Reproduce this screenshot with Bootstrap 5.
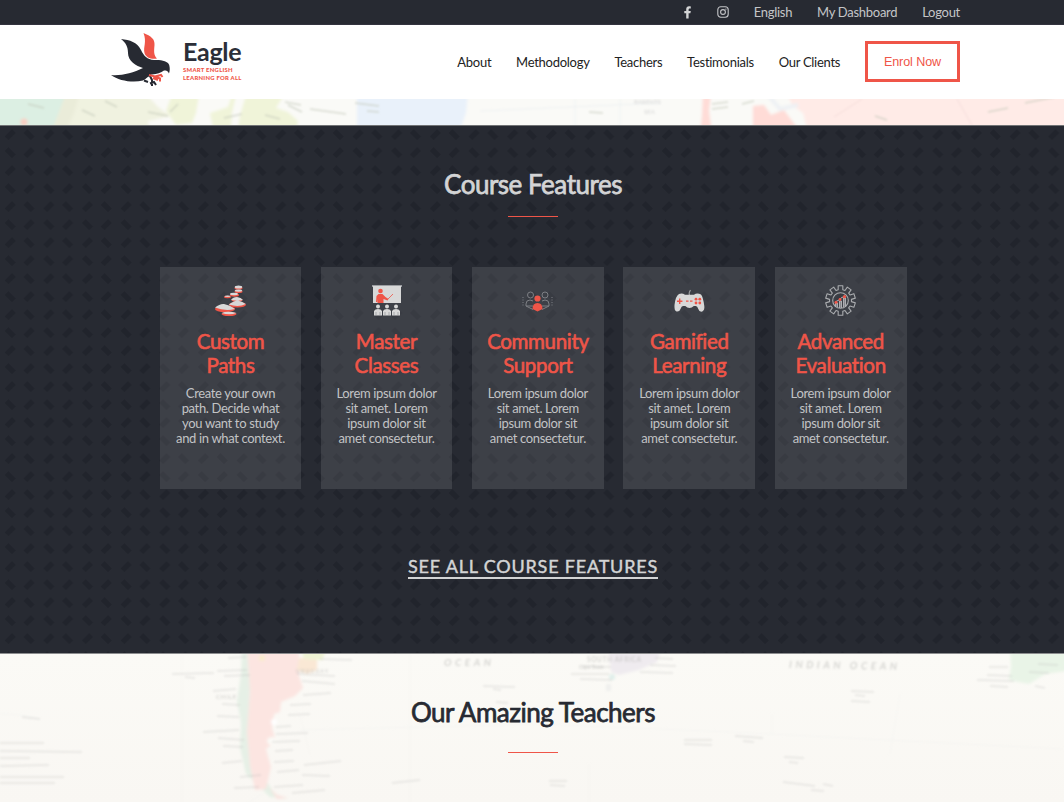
<!DOCTYPE html>
<html lang="en">
<head>
<meta charset="utf-8">
<meta name="viewport" content="width=device-width, initial-scale=1">
<title>Eagle – Smart English</title>
<link href="https://cdn.jsdelivr.net/npm/bootstrap@5.3.0/dist/css/bootstrap.min.css" rel="stylesheet">
<style>
:root{--ink:#272a32;--coral:#ef5548;--silver:#d3d4d5}
body{font-family:Lato,sans-serif;font-size:13px;color:var(--ink);background:#fbfaf6;height:802px;overflow:hidden}
a{text-decoration:none;color:inherit}
.topbar{height:25px;background:var(--ink);color:#c4c5c8;padding-right:104px;gap:24.8px;border-bottom:1px solid #33333f}
.topbar,.mainbar nav{font-size:13px;line-height:20px;letter-spacing:-.27px}
.mainbar{height:74px;background:#fff;padding:0 104px 1px 110px}
.mainbar nav{gap:24.8px;color:#222}
.eagle-mark{margin-top:-3px}
.brand-words{margin:-5px 0 0 13px}
.brand-name{font-size:25px;font-weight:700;line-height:28px;letter-spacing:-.3px;color:#2b2e38}
.brand-tag{font-size:5.9px;font-weight:900;line-height:7.7px;color:var(--coral);letter-spacing:.27px;margin-top:1.5px}
.enrol{width:95px;height:41px;border:3px solid var(--coral);color:var(--coral);font-family:"Liberation Sans",sans-serif;font-size:12.6px;letter-spacing:-.1px}
.map-strip{height:26px;overflow:hidden}
.map-strip svg,.map-bottom svg{display:block}
.features{height:529px;background:var(--ink);color:var(--silver);border-top:1px solid #717375;border-bottom:1px solid #8c8d8f}
.features>.pattern{inset:0;width:100%;height:100%}
.sec-title{font-size:26px;line-height:32px;font-weight:400;margin:0;letter-spacing:-.48px;-webkit-text-stroke:.75px currentColor}
.sec-head{padding-left:2px}
.rule{width:50px;height:1px;background:var(--coral)}
.cards{padding-left:160px;gap:19.6px;margin-top:50px}
.feature{width:131.8px;height:222px;background:rgba(255,255,255,.105);padding-top:17.5px}
.feature:first-child{width:141px}
.feature h3{font-size:20.5px;line-height:24.2px;margin:13px 0 9.5px;color:var(--coral);font-weight:400;letter-spacing:-.34px;font-variant-ligatures:common-ligatures;-webkit-text-stroke:.6px currentColor}
.feature p{font-size:13px;line-height:14.7px;margin:0;color:#c2c3c5;letter-spacing:-.35px}
.see-all{font-size:18px;line-height:21px;letter-spacing:.8px;border-bottom:2px solid var(--silver);-webkit-text-stroke:.45px currentColor}
.teachers{height:148px}
.map-bottom{inset:0}
</style>
</head>
<body>
<div class="topbar d-flex justify-content-end align-items-center">
  <a href="#" class="d-flex" aria-label="Facebook"><svg width="8" height="13" viewBox="0 0 8 13"><path fill="#d3d4d5" d="M2.2 12.5V7.2H.3V4.9h1.9V3.2C2.2 1.3 3.3.3 5 .3c.9 0 1.800.2 1.800.2v1.900h-1c-1 0-1.200.6-1.200 1.200v1.300h2.200l-.4 2.300H4.600v5.300z"/></svg></a>
  <a href="#" class="d-flex" aria-label="Instagram"><svg width="12" height="12" viewBox="0 0 12 12" fill="none" stroke="#c4c5c8"><rect x=".8" y=".8" width="10.4" height="10.4" rx="3" stroke-width="1.1"/><circle cx="6" cy="6" r="2.4" stroke-width="1.1"/><circle cx="8.9" cy="3.1" r=".7" fill="#c4c5c8" stroke="none"/></svg></a>
  <a href="#">English</a><a href="#">My Dashboard</a><a href="#">Logout</a>
</div>
<header class="mainbar d-flex justify-content-between align-items-center">
  <a href="#" class="d-flex align-items-center">
    <svg class="eagle-mark" width="60" height="56" viewBox="0 0 60 56">
      <path fill="#ef5548" d="M33.500 1C41 4 45 7 44.500 13C44 19 43.500 23 47 26.500C41.500 27.500 36 26 34.500 21C33 15 37 10 33.500 1Z"/>
      <path fill="#272a32" d="M11 7C20 8 27 10 31 18C34 24 37 27.500 44 28C51 27.500 58 29 59.200 33C60 36 60 38.500 59 41.500C58 39 56.500 38.500 54 38.500C51 41 47 42 42 42.500C38 43 37 47 33 48.500C23 51 9 49 1 43C11 44 23 41 33 36C26 34 18 29 18 21C18 15 16 11 11 7Z"/>
      <path d="M32 46l9-3.500M34 48.500l4 1.500M40 44l2 4v6M40 51.500l4-1.500 2 3" fill="none" stroke="#272a32" stroke-width="2"/>
      <path d="M39 43l6 1.500 6-1.500 1.500 2M45 44.500l5 2v3M43 46l5 2" fill="none" stroke="#ef5548" stroke-width="2"/>
    </svg>
    <span class="brand-words d-flex flex-column"><span class="brand-name">Eagle</span><span class="brand-tag">SMART ENGLISH<br>LEARNING FOR ALL</span></span>
  </a>
  <nav class="d-flex align-items-center">
    <a href="#">About</a><a href="#">Methodology</a><a href="#">Teachers</a><a href="#">Testimonials</a><a href="#">Our Clients</a>
    <a href="#" class="enrol d-flex justify-content-center align-items-center">Enrol Now</a>
  </nav>
</header>
<div class="map-strip">
  <svg width="1064" height="26" viewBox="0 0 1064 26">
    <defs><filter id="soft"><feGaussianBlur stdDeviation=".9"/></filter><filter id="softer" x="-5%" width="110%"><feGaussianBlur stdDeviation="1.700"/></filter></defs>
    <rect width="1064" height="28" fill="#fafaf7"/>
    <g filter="url(#softer)">
      <path fill="#dcefe3" d="M-6-6H67L61 14 51 34H-6Z"/><path fill="#f0f2e0" d="M67-6H145L158 8 170 17 148 22 150 34H51Z"/>
      <path fill="#eaecd9" d="M66-6h14l-6 20-8 18H52Z"/>
      <path fill="#f0f4d9" d="M172-4h27l-3 18-4 10-16 2-10-14ZM210 14l18-6 4-12h52l-8 13 12 4 10 9-2 12h-82Z"/>
      <path fill="#fafaf7" d="M236-4h10l-6 20-2 14h-7l1-16Z"/>
      <path fill="#e9f1fa" d="M357-6h111l-2 20-8 22H357Z"/>
      <path fill="#ffebe7" d="M786-6h290v40H808l-5-20-10-7Z"/>
      <path fill="#ffdcd7" d="M703-6h8l-2 18 3 22h-12l2-17ZM753 7l11-1 7 10 13-5 17 23h-48Z"/>
      <path d="M768-4l12 14 18-4" stroke="#eef1f4" fill="none" stroke-width="4"/>
      <circle cx="24" cy="23" r="3.500" fill="#f9cfc3"/>
    </g>
    <g filter="url(#soft)">
      <g stroke="#c2c6b8" stroke-width="1.700" opacity=".6" fill="none"><path d="M28 5l16 4M82 11l13 6M105 2l12 6M148 13l20 4M178 5l-8 8M224 19l18-4M265 16l15 4M285 3l16 3M288 6l14 7M310 10l36 5M355 4l24 3M367 12l12 1M589 13l14 1M712 5l16-2M712 10l16-2M742 5l12-3M875 17l12 4M988 13l20-4M1025 4l30-6"/></g>
      <path d="M957 0l16 28M834 18l28-18" stroke="#f4dcda" fill="none"/>
      <path d="M480 12l180-8M575 0v28M620 0v28" stroke="#eef1f2" fill="none"/>
    </g>
    <g fill="#dededd" font-family="Lato" font-size="6" font-weight="700" filter="url(#soft)"><text x="634" y="5">BARENTS</text><text x="644" y="15">SEA</text></g>
  </svg>
</div>
<section class="features position-relative d-flex flex-column">
  <svg class="pattern position-absolute">
    <defs><pattern id="dashes" width="38.65" height="36" patternUnits="userSpaceOnUse">
      <path d="M6.500 12.400l7.400-7.400M25.300 5l7.400 7.400M6.500 23l7.400 7.400M25.300 30.400l7.400-7.400" stroke="#21242c" stroke-width="5.500" fill="none"/>
    </pattern></defs><rect width="100%" height="100%" fill="url(#dashes)"/>
  </svg>
  <div class="sec-head position-relative d-flex flex-column align-items-center" style="padding-top:42px">
    <h2 class="sec-title">Course Features</h2>
    <div class="rule" style="margin-top:16px"></div>
  </div>
  <div class="cards position-relative d-flex text-center">
    <article class="feature"><svg width="31" height="31" viewBox="0 0 31 31"><g fill="#ef5548"><ellipse cx="23.500" cy="3" rx="4" ry="1.800"/><ellipse cx="23.500" cy="6.500" rx="4" ry="1.500"/><ellipse cx="19.500" cy="10" rx="4.500" ry="1.700"/><ellipse cx="12.500" cy="12" rx="3.500" ry="1.200"/><ellipse cx="22" cy="15" rx="5.500" ry="2"/><ellipse cx="22.500" cy="19.700" rx="8.500" ry="2.800"/><ellipse cx="10" cy="24" rx="10" ry="3.300"/><ellipse cx="14" cy="29" rx="7.500" ry="2.200"/></g><g fill="#d8d8d8"><ellipse cx="23.500" cy="2" rx="3.700" ry="1.500"/><ellipse cx="23.500" cy="5.600" rx="3.700" ry="1.200"/><ellipse cx="19" cy="9" rx="4" ry="1.200"/><ellipse cx="12.500" cy="11.300" rx="3" ry=".7"/><path d="M16 15q2-3 6-3 4 .5 6 3-5 1.500-12 0ZM13.700 19.500q6-4 9-4 5 1 8 3.500-7 3.500-17 .5ZM0 22.500q5-4 9-3.500 6 1 11 5-10 2.500-20-1.500ZM6.500 28q6-2.500 15 0-7 2.500-15 0Z"/></g></svg><h3>Custom<br>Paths</h3><p>Create your own<br>path. Decide what<br>you want to study<br>and in what context.</p></article>
    <article class="feature"><svg width="31" height="31" viewBox="0 0 31 31"><path fill="#9b9da1" d="M1 0h30v2H1z"/><path fill="#d8d8d8" d="M2 1h28v17H2z"/><g fill="#ef5548"><circle cx="9.500" cy="6" r="2.300"/><path d="M5 17l.5-6 2-2h4l3 3 3 2-1 1.500-4-1.500v4H6.500v-4l-.3 3Z"/></g><path d="M16 15l6-6" stroke="#ef5548" stroke-width=".8"/><g fill="#d8d8d8"><path d="M3 30.500v-4.500q1-2 4-2t4 2v4.500ZM12 30.500v-4.500q1-2 4-2t4 2v4.500ZM21 30.500v-4.500q1-2 4-2t4 2v4.500Z"/><circle cx="7" cy="21.500" r="2"/><circle cx="16" cy="21.500" r="2"/><circle cx="25" cy="21.500" r="2"/></g><path d="M5 27v3M9 27v3M14 27v3M18 27v3M23 27v3M27 27v3" stroke="#888a8e" stroke-width=".6"/></svg><h3>Master<br>Classes</h3><p>Lorem ipsum dolor<br>sit amet. Lorem<br>ipsum dolor sit<br>amet consectetur.</p></article>
    <article class="feature"><svg width="31" height="31" viewBox="0 0 31 31"><g stroke="#7d7f84" stroke-width="1" fill="none"><circle cx="8.500" cy="10" r="3"/><circle cx="23" cy="10" r="3"/><path d="M11 21H4v-2q0-4 4-4l3 1M20 21h7v-2q0-4-4-4l-3 1M4 21l7 3.500M27 21l-7 3.500"/><path d="M1 12v9M30 12v9" stroke-dasharray="1 1.500"/></g><g fill="#ef5548"><circle cx="15.500" cy="13.500" r="3.100"/><path d="M10.500 24q0-6 5-6t5 6l-5 2.500Z"/></g></svg><h3>Community<br>Support</h3><p>Lorem ipsum dolor<br>sit amet. Lorem<br>ipsum dolor sit<br>amet consectetur.</p></article>
    <article class="feature"><svg width="31" height="31" viewBox="0 0 31 31"><path d="M15.500 10q-1-2 1-5" stroke="#999b9e" fill="none" stroke-width="1.200"/><path fill="#d8d8d8" d="M5 9q3-1.500 6 .7h9Q23 7.500 27 9.500q2 2 3.300 11.500.5 4-2 5.500-3 .8-4-2.500-1-3-2.500-3h-2q-2 2-4.300 2t-4.200-2H9q-1.500 0-2.500 3t-4 2.500Q0 25.500.5 20 1.500 11 5 9Z"/><g fill="#ef5548"><path d="M5 13.500h1.400V15.500h2v1.400h-2v2H5v-2H3v-1.400h2ZM12 15.500h2.500v1.200H12ZM16 15.500h2.500v1.200H16Z"/><circle cx="22" cy="14.200" r="1.400"/><circle cx="25.800" cy="14.200" r="1.400"/><circle cx="22" cy="18" r="1.400"/><circle cx="25.800" cy="18" r="1.400"/></g></svg><h3>Gamified<br>Learning</h3><p>Lorem ipsum dolor<br>sit amet. Lorem<br>ipsum dolor sit<br>amet consectetur.</p></article>
    <article class="feature"><svg width="31" height="31" viewBox="0 0 31 31"><g stroke="#a9abae" fill="none" stroke-width="1.100"><path id="gear" stroke-linejoin="round"/><circle cx="15.500" cy="15.500" r="7.800"/></g><path d="M10.500 22v-4h2v4M14.500 23v-7h2v7M18.500 22v-9h2v9" stroke="#b5b6b9" fill="#85878b" stroke-width=".9"/><path d="M10 17l4-2 2-2 4-2" stroke="#b5b6b9" fill="none"/><g fill="#ef5548"><circle cx="11" cy="17.200" r="1.500"/><circle cx="15" cy="14.500" r="1.400"/><circle cx="19.500" cy="11.700" r="1.600"/></g></svg><h3>Advanced<br>Evaluation</h3><p>Lorem ipsum dolor<br>sit amet. Lorem<br>ipsum dolor sit<br>amet consectetur.</p></article>
  </div>
  <div class="sec-head position-relative text-center" style="margin-top:67px"><a href="#" class="see-all d-inline-block">SEE ALL COURSE FEATURES</a></div>
</section>
<section class="teachers position-relative">
  <div class="map-bottom position-absolute">
  <svg width="1064" height="148" viewBox="0 0 1064 148">
    <defs><linearGradient id="paper" x2="0" y2="1"><stop stop-color="#fbfaf6"/><stop offset="1" stop-color="#f9f7f3"/></linearGradient></defs>
    <rect width="1064" height="149" fill="url(#paper)"/>
    <g filter="url(#softer)">
      <path fill="#e6f0e6" d="M242-8h7l1 38-1 40 4 30 4 20 10 8 8 12 12 5-17-2-12-12-12-11-6-26 1-25-4-22 4-27Z"/>
      <path fill="#fce5e1" d="M247-8h52v30l4 12-8 8-14 6-1 10-6 2-2 14 4 13-10 8 5 18-5 22-11 1-5-24-3-34 3-40Z"/>
      <path fill="#fbe3df" d="M269 133l8 8 11 3-11 1Z"/>
      <path fill="#fae8d5" d="M299 4h18v12l-10 4-10-4Z"/><path fill="#eff3d4" d="M300-8h28l-6 14-18-1Z"/>
      <circle cx="262" cy="4" r="3" fill="#faecca"/><circle cx="274" cy="68" r="3" fill="#fff"/><ellipse cx="272" cy="87" rx="5" ry="4" fill="#fbfaf6"/>
      <path fill="#efebef" d="M608-8h54l-5 16-18 8-20 5-8-3Z"/><circle cx="612" cy="23" r="3" fill="#dfeeea"/><path fill="#efefed" d="M606 30h5v7h-5z"/>
      <path fill="#e9f4e7" d="M1010-8h63v24l-28 4-16 10-20-4 2-14Z"/>
    </g>
    <g filter="url(#soft)">
      <g stroke="#b5b4b3" stroke-width="1.500" opacity=".3">
        <path d="M172 20l42-1M217 17l30-1M224 22l26-1M228 4l18-1M213 37l23-2M222 50l18 1M217 62l22 1M203 78l36-2M218 84l26 2M223 92l20 1M222 109l20-2M240 123l21-2M234 134l25-1M297 20l38 2M302 27l33 3M303 41l28-2M290 51l21-1M288 61l22-1M276 73l15-1M276 80l32-1M272 88l28-1M275 97l18-1M274 108l20-1M277 118l22-2M274 133l29-2M292 139l33-3M304 111l37-4M302 121l28 1M320 5l32 1M185 23l10 1"/>
        <path d="M0 89h44M0 97l82 1M0 104h30M0 112l49-1M0 123h64M0 129h55M22 63l18 2M483 32l32 1M493 35l8 1M496 48l12 1M392 129l28-3M581 12l30 1M571 20h38M580 25l32 1M640 18l33 1M650 11l26 1M655 4l18 1M684 86h28M684 90l28 1M735 82l28 2M743 87l11 1M784 103l20 1M789 108l9 1M783 128l32 4M823 130l10 2M811 136l13 1M851 37l23 1M851 47l19 1M855 41l10 1M549 127h18M550 131l15 1M989 13h19M987 21l25 1M977 26l37 1M990 32l18 1M1029 18l20 1M1035 32l10 2M1038 10l20 1"/>
      </g>
      <g stroke="#dfe3e2" opacity=".18" fill="none"><path d="M300 76l240-6 190 8 333 17M182 0v149M410 0v149M772 60v20M890 100l10-60M589 149V110M300 61l10 40M0 60q22 0 40 5M262 140l-14 9"/></g>
    </g>
    <g fill="#b2b2af" opacity=".5" font-family="Lato" filter="url(#soft)">
      <text x="444" y="12" font-size="10" font-style="italic" font-weight="700" textLength="47">OCEAN</text>
      <text x="789" y="14" font-size="10" font-style="italic" font-weight="700" textLength="108" transform="rotate(1 789 14)">INDIAN OCEAN</text>
      <text x="216" y="45" font-size="6" font-weight="700" textLength="20">CHILE</text><text x="587" y="8" font-size="6.500" font-weight="700" textLength="54">SOUTH AFRICA</text><text x="296" y="19" font-size="5" font-weight="700" textLength="32">URUGUAY</text><text x="579" y="15" font-size="5" font-weight="700">Cape Town</text>
    </g>
  </svg>
  </div>
  <div class="sec-head position-relative d-flex flex-column align-items-center" style="padding-top:42px">
    <h2 class="sec-title">Our Amazing Teachers</h2>
    <div class="rule" style="margin-top:24px"></div>
  </div>
</section>
<script src="https://cdn.jsdelivr.net/npm/bootstrap@5.3.0/dist/js/bootstrap.bundle.min.js"></script>
<script>
// Outline of the ten-toothed gear: each tooth widens slightly at its root.
const pts = [];
for (let i = 0; i < 10; i++) {
  const mid = i * 36 - 90;
  for (const [off, r] of [[-12, 11], [-9, 15], [9, 15], [12, 11]]) {
    const a = (mid + off) * Math.PI / 180;
    pts.push((15.5 + r * Math.cos(a)).toFixed(2) + ' ' + (15.5 + r * Math.sin(a)).toFixed(2));
  }
}
document.getElementById('gear').setAttribute('d', 'M' + pts.join('L') + 'Z');
</script>
</body>
</html>
